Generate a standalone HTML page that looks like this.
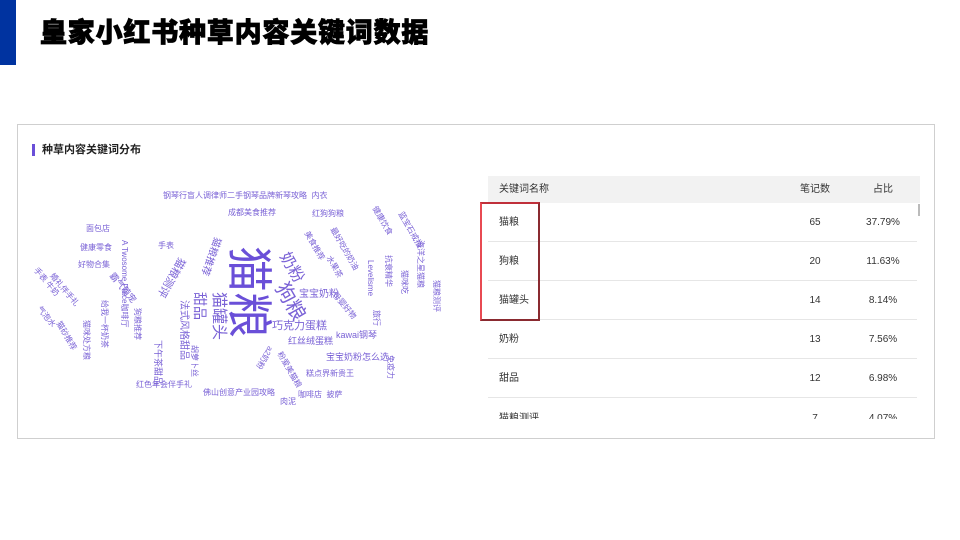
<!DOCTYPE html>
<html><head><meta charset="utf-8"><style>
body{margin:0;width:960px;height:540px;background:#fff;position:relative;overflow:hidden;font-family:"Liberation Sans","Noto Sans CJK SC",sans-serif}
.bar{position:absolute;left:0;top:0;width:16px;height:65px;background:#0033a0}
.title{position:absolute;left:40px;top:15px;font-size:27px;font-weight:900;color:#000;letter-spacing:0.8px;-webkit-text-stroke:0.8px #000;line-height:36px}
.panel{position:absolute;left:17px;top:124px;width:916px;height:313px;border:1px solid #cfcfcf}
.sub{position:absolute;left:32px;top:144px;font-size:11px;color:#222;font-weight:bold;padding-left:7px;border-left:3px solid #6a4fd8;line-height:12px}
.th{position:absolute;left:488px;top:176px;width:432px;height:27px;background:#f2f2f2;font-size:10px;color:#333;line-height:12px}
.row{position:absolute;left:488px;width:429px;height:38px;border-bottom:1px solid #e6e6e6;font-size:10px;color:#333;line-height:12px}
.c1{position:absolute;left:11px;top:14px}
.c2{position:absolute;left:310px;width:34px;text-align:center;top:14px}
.c3{position:absolute;left:370px;width:50px;text-align:center;top:14px}
.red{position:absolute;left:480px;top:202px;width:56px;height:115px;border:2px solid #c0303a;border-left-color:#e84a52;border-bottom-color:#8a2a30;border-right-color:#8a2a30}
.w{position:absolute;color:#7a62d6;white-space:nowrap;line-height:1}
.v{writing-mode:vertical-rl;text-orientation:sideways}
</style></head><body>
<div class="bar"></div>
<div class="title">皇家小红书种草内容关键词数据</div>
<div class="panel"></div>
<div class="sub">种草内容关键词分布</div>
<div class="th"><span style="position:absolute;left:11px;top:8px">关键词名称</span><span style="position:absolute;left:310px;width:34px;text-align:center;top:8px">笔记数</span><span style="position:absolute;left:370px;width:50px;text-align:center;top:8px">占比</span></div>
<div style="position:absolute;left:918px;top:204px;width:2px;height:12px;background:#bbb"></div>
<div class="row" style="top:203px"><span class="c1">猫粮</span><span class="c2">65</span><span class="c3">37.79%</span></div>
<div class="row" style="top:242px"><span class="c1">狗粮</span><span class="c2">20</span><span class="c3">11.63%</span></div>
<div class="row" style="top:281px"><span class="c1">猫罐头</span><span class="c2">14</span><span class="c3">8.14%</span></div>
<div class="row" style="top:320px"><span class="c1">奶粉</span><span class="c2">13</span><span class="c3">7.56%</span></div>
<div class="row" style="top:359px"><span class="c1">甜品</span><span class="c2">12</span><span class="c3">6.98%</span></div>
<div style="position:absolute;left:488px;top:398px;width:432px;height:21px;overflow:hidden;font-size:10px;color:#333;line-height:12px"><span style="position:absolute;left:11px;top:15px">猫粮测评</span><span style="position:absolute;left:310px;width:34px;text-align:center;top:15px">7</span><span style="position:absolute;left:370px;width:50px;text-align:center;top:15px">4.07%</span></div>
<div class="red"></div>

<div class="w" style="left:163px;top:192px;font-size:8px">钢琴行盲人调律师二手钢琴品牌新琴攻略&nbsp;&nbsp;内衣</div>
<div class="w v" style="left:226px;top:246px;font-size:46px;color:#6a4fd8">猫粮</div>
<div class="w v" style="left:280px;top:282px;font-size:20px;transform:rotate(-30deg)">狗粮</div>
<div class="w v" style="left:283px;top:252px;font-size:16px;transform:rotate(-30deg)">奶粉</div>
<div class="w v" style="left:210px;top:292px;font-size:16px">猫罐头</div>
<div class="w v" style="left:193px;top:292px;font-size:14px">甜品</div>
<div class="w v" style="left:178px;top:300px;font-size:10px">法式风格甜品</div>
<div class="w" style="left:272px;top:321px;font-size:11px">巧克力蛋糕</div>
<div class="w" style="left:299px;top:290px;font-size:10px">宝宝奶粉</div>
<div class="w" style="left:288px;top:337px;font-size:9px">红丝绒蛋糕</div>
<div class="w" style="left:336px;top:331px;font-size:9px">kawai钢琴</div>
<div class="w" style="left:326px;top:353px;font-size:9px">宝宝奶粉怎么选</div>
<div class="w" style="left:306px;top:370px;font-size:8px">糕点界新贵王</div>
<div class="w" style="left:203px;top:389px;font-size:8px">佛山创意产业园攻略</div>
<div class="w" style="left:298px;top:391px;font-size:8px">咖啡店&nbsp;&nbsp;披萨</div>
<div class="w" style="left:280px;top:398px;font-size:8px">肉泥</div>
<div class="w" style="left:136px;top:381px;font-size:8px">红色年会伴手礼</div>
<div class="w" style="left:228px;top:209px;font-size:8px">成都美食推荐</div>
<div class="w" style="left:312px;top:210px;font-size:8px">红狗狗粮</div>
<div class="w" style="left:86px;top:225px;font-size:8px">面包店</div>
<div class="w" style="left:80px;top:244px;font-size:8px">健康零食</div>
<div class="w" style="left:78px;top:261px;font-size:8px">好物合集</div>
<div class="w" style="left:158px;top:242px;font-size:8px">手表</div>
<div class="w v" style="left:165px;top:255px;font-size:11px;transform:rotate(30deg)">猫粮测评</div>
<div class="w v" style="left:205px;top:236px;font-size:10px;transform:rotate(20deg)">猫粮推荐</div>
<div class="w v" style="left:153px;top:340px;font-size:9px">下午茶甜品</div>
<div class="w v" style="left:118px;top:270px;font-size:9px;transform:rotate(-40deg)">霸气萌宠</div>
<div class="w v" style="left:133px;top:308px;font-size:8px">狗粮推荐</div>
<div class="w v" style="left:120px;top:240px;font-size:8px">A Twosome Place咖啡厅</div>
<div class="w v" style="left:100px;top:300px;font-size:8px">给我一杯奶茶</div>
<div class="w v" style="left:82px;top:320px;font-size:8px">猫咪处方粮</div>
<div class="w v" style="left:60px;top:270px;font-size:8px;transform:rotate(-40deg)">婚礼伴手礼</div>
<div class="w v" style="left:42px;top:265px;font-size:8px;transform:rotate(-40deg)">手表 牛奶</div>
<div class="w v" style="left:42px;top:305px;font-size:8px;transform:rotate(-40deg)">气泡水</div>
<div class="w v" style="left:62px;top:320px;font-size:8px;transform:rotate(-30deg)">猫砂推荐</div>
<div class="w v" style="left:190px;top:345px;font-size:8px">胡萝卜丝</div>
<div class="w v" style="left:260px;top:345px;font-size:8px;transform:rotate(30deg)">a2奶粉</div>
<div class="w v" style="left:285px;top:350px;font-size:8px;transform:rotate(-30deg)">粉爱美猫粮</div>
<div class="w v" style="left:310px;top:230px;font-size:8px;transform:rotate(-30deg)">美食推荐</div>
<div class="w v" style="left:340px;top:225px;font-size:8px;transform:rotate(-30deg)">最好吃的奶油</div>
<div class="w v" style="left:330px;top:255px;font-size:8px;transform:rotate(-30deg)">水果茶</div>
<div class="w v" style="left:340px;top:290px;font-size:8px;transform:rotate(-40deg)">母婴好物</div>
<div class="w v" style="left:366px;top:260px;font-size:8px">Levelisme</div>
<div class="w v" style="left:384px;top:255px;font-size:8px">抗衰精华</div>
<div class="w v" style="left:400px;top:270px;font-size:8px">猫咪吃</div>
<div class="w v" style="left:416px;top:240px;font-size:8px">海洋之星猫粮</div>
<div class="w v" style="left:432px;top:280px;font-size:8px">猫粮测评</div>
<div class="w v" style="left:372px;top:310px;font-size:8px">旅行</div>
<div class="w v" style="left:378px;top:205px;font-size:8px;transform:rotate(-30deg)">健康饮食</div>
<div class="w v" style="left:406px;top:210px;font-size:8px;transform:rotate(-30deg)">蓝宝石戒指</div>
<div class="w v" style="left:386px;top:355px;font-size:8px">免疫力</div>
</body></html>
